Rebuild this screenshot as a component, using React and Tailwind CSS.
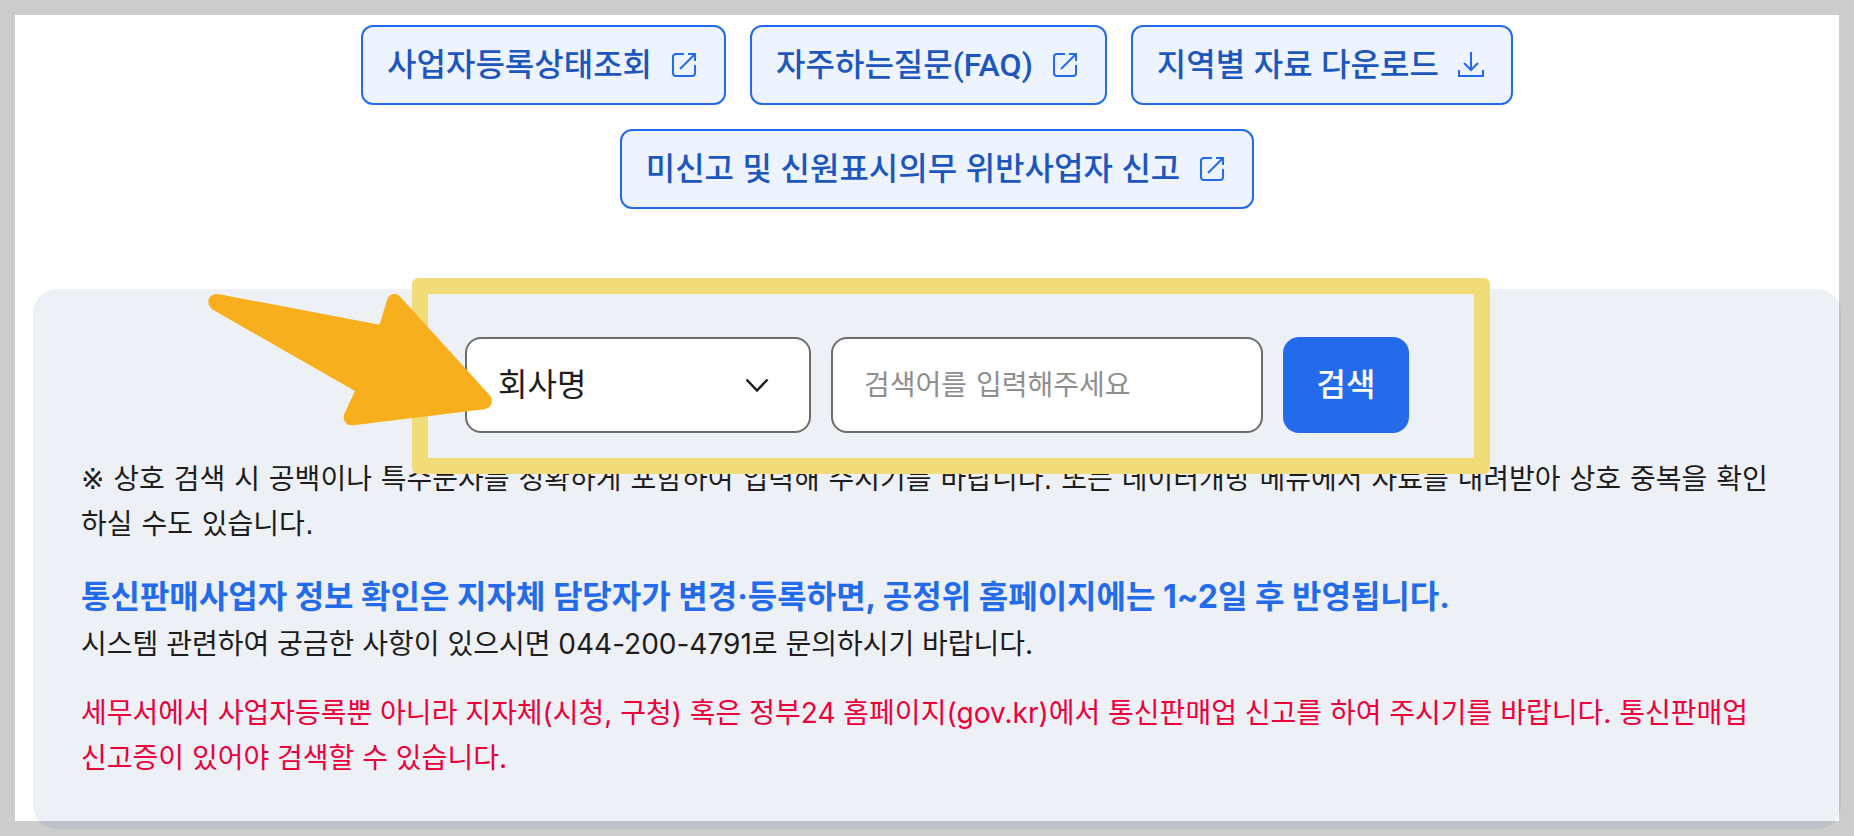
const quickLinks = [
  { label: '사업자등록상태조회', icon: 'external' },
  { label: '자주하는질문(FAQ)', icon: 'external', font: "font-[Roboto,'Noto_Sans_CJK_KR',sans-serif]" },
  { label: '지역별 자료 다운로드', icon: 'download' },
  { label: '미신고 및 신원표시의무 위반사업자 신고', icon: 'external' },
];

function ExternalIcon() {
  return (
    <svg className="size-8 shrink-0" viewBox="0 0 32 32" fill="none" stroke="currentColor" strokeWidth="2" aria-hidden="true">
      <path d="M16 5H8a3 3 0 0 0-3 3v16a3 3 0 0 0 3 3h16a3 3 0 0 0 3-3v-8" />
      <path d="M20 5h7v7M27 5 12 20" />
    </svg>
  );
}

function DownloadIcon() {
  return (
    <svg className="size-8 shrink-0" viewBox="0 0 32 32" fill="none" stroke="currentColor" strokeWidth="2" aria-hidden="true">
      <path d="M16 3v18M9 14l7 7 7-7" />
      <path d="M4 21v6h24v-6" />
    </svg>
  );
}

function QuickLink({ label, icon, font = '' }) {
  return (
    <a
      href="#"
      className={`flex h-20 items-center gap-4 rounded-xl border-2 border-[#246beb] bg-[#eef4ff] px-6 text-[32px] font-medium text-[#246beb] ${font}`}
    >
      <span className="whitespace-nowrap text-[#1d56bc]">{label}</span>
      {icon === 'download' ? <DownloadIcon /> : <ExternalIcon />}
    </a>
  );
}

function SearchForm() {
  return (
    <form className="relative flex gap-5" onSubmit={(e) => e.preventDefault()}>
      <div className="relative">
        <select
          aria-label="검색 구분"
          className="h-24 w-[346px] appearance-none rounded-2xl border-2 border-[#6d6d6d] bg-white px-[31px] text-[32px] text-[#1d1d1d]"
        >
          <option>회사명</option>
        </select>
        <svg
          className="pointer-events-none absolute inset-y-0 right-9 my-auto size-9"
          viewBox="0 0 36 36"
          fill="none"
          stroke="#1d1d1d"
          strokeWidth="2.5"
          aria-hidden="true"
        >
          <path d="m7.500 12.500 10.500 11 10.500-11" />
        </svg>
      </div>
      <input
        type="text"
        aria-label="검색어"
        placeholder="검색어를 입력해주세요"
        className="h-24 w-[432px] rounded-2xl border-2 border-[#6d6d6d] bg-white px-[31px] font-['DejaVu_Sans','Noto_Sans_CJK_KR',sans-serif] text-[28px] placeholder:text-[#8e8e8e]"
      />
      <button type="submit" className="h-24 w-[126px] rounded-2xl bg-[#246beb] text-[32px] font-medium text-white">
        검색
      </button>

      {/* highlight around the search form */}
      <div className="pointer-events-none absolute -top-[59px] -right-[81px] -bottom-[41px] -left-[53px] rounded-md border-16 border-[#f2db79]" />
      <svg
        className="pointer-events-none absolute -top-[43px] -left-[257px] h-[132px] w-[284px]"
        viewBox="208 294 284 132"
        fill="#f8af1d"
        aria-hidden="true"
      >
        <path d="M219 294.200 379.500 324.700 386.500 302C388.500 293 396 292 400.500 297L490 395.500C494 402 491 408.500 484.500 409.300L353 425.300C346 426 342 420 344.500 413.500L355 391 212.500 309.500C205 304 208 292.500 219 294.200Z" />
      </svg>
    </form>
  );
}

export default function App() {
  return (
    <div className="relative min-h-screen overflow-hidden bg-white pt-[25px] pr-[13px] pb-[7px] pl-[33px] font-[Inter,'Noto_Sans_CJK_KR',sans-serif] text-[#1d1d1d]">
      <nav className="mx-auto flex max-w-[1200px] flex-wrap justify-center gap-6">
        {quickLinks.map((link) => (
          <QuickLink key={link.label} {...link} />
        ))}
      </nav>

      <section className="mt-20 rounded-3xl bg-[#edf0f5] p-12">
        <div className="flex justify-center">
          <SearchForm />
        </div>
        <p className="mt-6 font-['DejaVu_Sans','Noto_Sans_CJK_KR',sans-serif] text-[28px] leading-[45px]">
          ※ 상호 검색 시 공백이나 특수문자를 정확하게 포함하여 입력해 주시기를 바랍니다. 또는 데이터개방 메뉴에서 자료를 내려받아 상호 중복을 확인하실 수도 있습니다.
        </p>
        <p className="mt-6 text-[32px] leading-[51px] font-bold text-[#246beb]">
          통신판매사업자 정보 확인은 지자체 담당자가 변경·등록하면, 공정위 홈페이지에는 1~2일 후 반영됩니다.
        </p>
        <p className="text-[28px] leading-[45px]">시스템 관련하여 궁금한 사항이 있으시면 044-200-4791로 문의하시기 바랍니다.</p>
        <p className="mt-6 text-[28px] leading-[45px] break-keep text-[#eb003b]">
          세무서에서 사업자등록뿐 아니라 지자체(시청, 구청) 혹은 정부24 홈페이지(gov.kr)에서 통신판매업 신고를 하여 주시기를 바랍니다. 통신판매업 신고증이 있어야 검색할 수 있습니다.
        </p>
      </section>

      <div className="pointer-events-none absolute inset-0 border-[15px] border-black/20" />
    </div>
  );
}
